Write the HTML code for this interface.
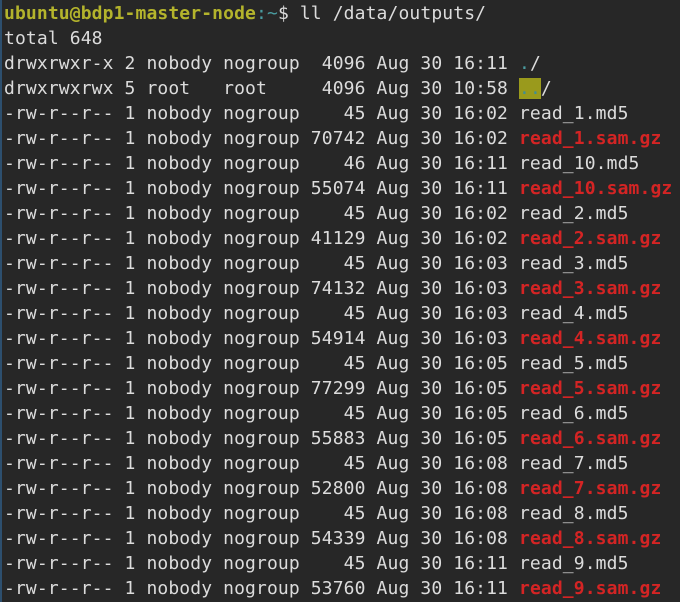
<!DOCTYPE html>
<html><head><style>
html,body{margin:0;padding:0;width:680px;height:602px;overflow:hidden;background:#272727}
body{border-left:2px solid #2d4f6e;box-sizing:border-box}
pre{margin:0;padding:1px 0 0 2px;font-family:"DejaVu Sans Mono","Liberation Mono",monospace;font-size:18px;letter-spacing:0.12px;line-height:25px;color:#dcdcdc}
.p{color:#b4b42c;font-weight:bold}
.t{color:#4a9ca0}
.r{color:#d42424;font-weight:bold}
.h{background:#9a9a1c;color:#3f8f94}
</style></head><body><pre><span class="p">ubuntu@bdp1-master-node</span><span class="t">:~</span>$ ll /data/outputs/
total 648
drwxrwxr-x 2 nobody nogroup  4096 Aug 30 16:11 <span class="t">.</span>/
drwxrwxrwx 5 root   root     4096 Aug 30 10:58 <span class="h">..</span>/
-rw-r--r-- 1 nobody nogroup    45 Aug 30 16:02 read_1.md5
-rw-r--r-- 1 nobody nogroup 70742 Aug 30 16:02 <span class="r">read_1.sam.gz</span>
-rw-r--r-- 1 nobody nogroup    46 Aug 30 16:11 read_10.md5
-rw-r--r-- 1 nobody nogroup 55074 Aug 30 16:11 <span class="r">read_10.sam.gz</span>
-rw-r--r-- 1 nobody nogroup    45 Aug 30 16:02 read_2.md5
-rw-r--r-- 1 nobody nogroup 41129 Aug 30 16:02 <span class="r">read_2.sam.gz</span>
-rw-r--r-- 1 nobody nogroup    45 Aug 30 16:03 read_3.md5
-rw-r--r-- 1 nobody nogroup 74132 Aug 30 16:03 <span class="r">read_3.sam.gz</span>
-rw-r--r-- 1 nobody nogroup    45 Aug 30 16:03 read_4.md5
-rw-r--r-- 1 nobody nogroup 54914 Aug 30 16:03 <span class="r">read_4.sam.gz</span>
-rw-r--r-- 1 nobody nogroup    45 Aug 30 16:05 read_5.md5
-rw-r--r-- 1 nobody nogroup 77299 Aug 30 16:05 <span class="r">read_5.sam.gz</span>
-rw-r--r-- 1 nobody nogroup    45 Aug 30 16:05 read_6.md5
-rw-r--r-- 1 nobody nogroup 55883 Aug 30 16:05 <span class="r">read_6.sam.gz</span>
-rw-r--r-- 1 nobody nogroup    45 Aug 30 16:08 read_7.md5
-rw-r--r-- 1 nobody nogroup 52800 Aug 30 16:08 <span class="r">read_7.sam.gz</span>
-rw-r--r-- 1 nobody nogroup    45 Aug 30 16:08 read_8.md5
-rw-r--r-- 1 nobody nogroup 54339 Aug 30 16:08 <span class="r">read_8.sam.gz</span>
-rw-r--r-- 1 nobody nogroup    45 Aug 30 16:11 read_9.md5
-rw-r--r-- 1 nobody nogroup 53760 Aug 30 16:11 <span class="r">read_9.sam.gz</span></pre></body></html>
